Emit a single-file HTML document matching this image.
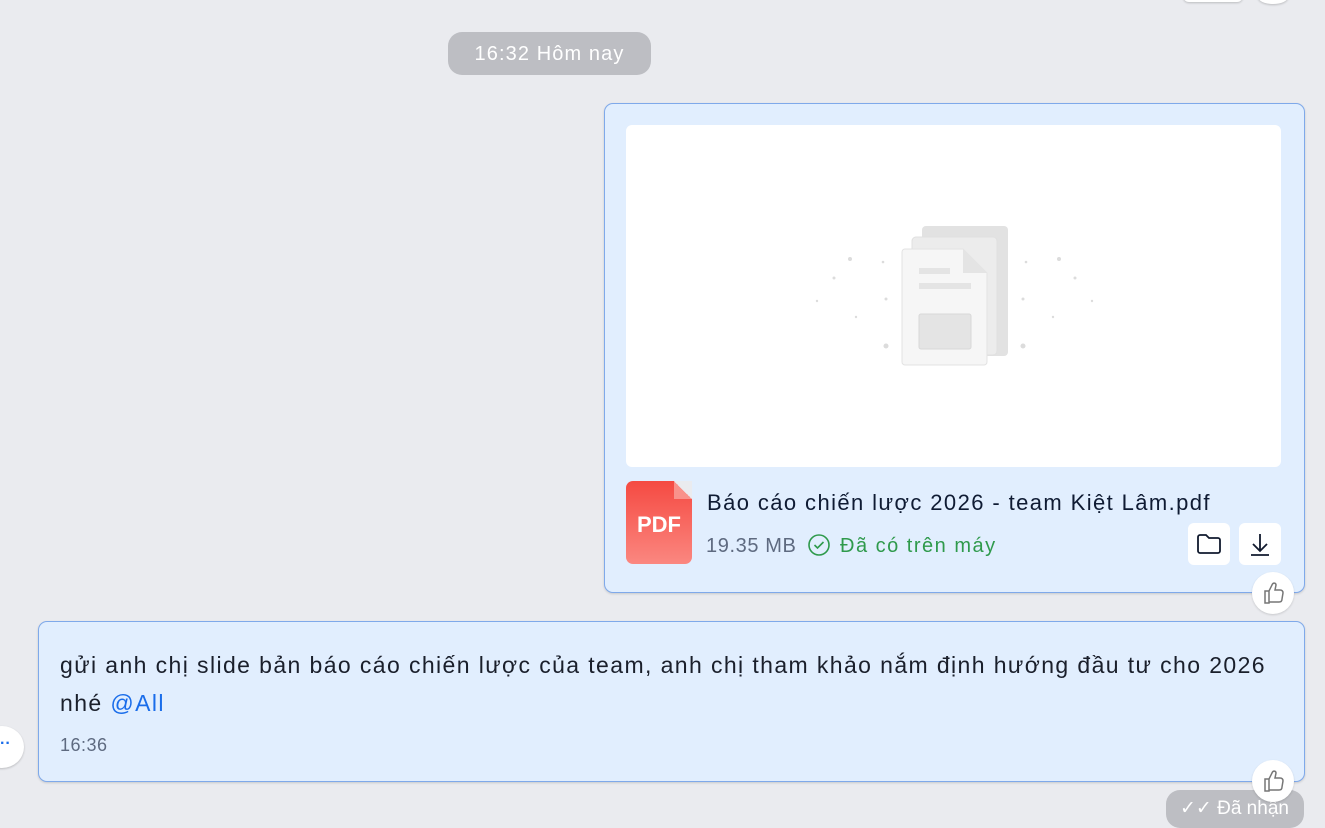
<!DOCTYPE html>
<html><head><meta charset="utf-8"><style>
*{margin:0;padding:0;box-sizing:border-box}
body{width:1325px;height:824px;background:#eaebef;font-family:"Liberation Sans","DejaVu Sans",sans-serif;position:relative;overflow:hidden}
.abs{position:absolute;white-space:nowrap}
.date{left:448px;top:32px;width:203px;height:43px;border-radius:14px;background:#bdbec3;color:#fff;font-size:20px;line-height:45px;text-align:center;letter-spacing:1.1px}
.b1{left:604px;top:103px;width:701px;height:490px;background:#e1eefe;border:1px solid #7fa9ea;border-radius:9px;box-shadow:0 1px 2px rgba(0,0,0,.15)}
.prev{left:626px;top:125px;width:655px;height:342px;background:#fff;border-radius:6px}
.pdf{left:626px;top:481px;width:66px;height:83px;border-radius:7px;background:linear-gradient(#f54a42,#fb8780);color:#fff;font-weight:bold;font-size:22px;text-align:center;line-height:88px}
.fold{left:674px;top:481px;width:18px;height:18px;background:linear-gradient(225deg,#eaebef 50%,#f9928b 50%)}
.btn{width:42px;height:42px;background:#fff;border-radius:6px}
.like{width:42px;height:42px;border-radius:50%;background:#fff;box-shadow:0 1px 2px rgba(0,0,0,.15)}
.b2{left:38px;top:621px;width:1267px;height:161px;background:#e1eefe;border:1px solid #7fa9ea;border-radius:9px;box-shadow:0 1px 2px rgba(0,0,0,.15)}
</style></head><body>
<div class="abs" style="left:1183px;top:-10px;width:60px;height:12px;background:#fff;border-radius:8px;box-shadow:0 1px 2px rgba(0,0,0,.2)"></div>
<div class="abs" style="left:1258px;top:-10px;width:30px;height:14px;background:#fff;border-radius:50%;box-shadow:0 1px 2px rgba(0,0,0,.2)"></div>
<div class="abs date">16:32 Hôm nay</div>
<div class="abs b1"></div>
<div class="abs prev"></div>
<svg class="abs" style="left:800px;top:210px" width="310" height="170" viewBox="0 0 310 170">
<rect x="122" y="16" width="86" height="130" rx="4" fill="#e2e2e2"/>
<rect x="112" y="27" width="85" height="118" rx="4" fill="#ececec" stroke="#e0e0e0"/>
<path d="M105 39h58l24 24v89a3 3 0 0 1-3 3h-79a3 3 0 0 1-3-3v-110a3 3 0 0 1 3-3z" fill="#f6f6f6" stroke="#e3e3e3"/>
<path d="M163 39v24h24z" fill="#e4e4e4"/>
<rect x="119" y="58" width="31" height="6" fill="#e4e4e4"/><rect x="119" y="73" width="52" height="6" fill="#e4e4e4"/>
<rect x="119" y="104" width="52" height="35" rx="2" fill="#e4e4e4" stroke="#d8d8d8"/>
<g fill="#dcdcdc"><circle cx="50" cy="49" r="2"/><circle cx="83" cy="52" r="1.3"/><circle cx="34" cy="68" r="1.5"/><circle cx="17" cy="91" r="1.2"/><circle cx="86" cy="89" r="1.5"/><circle cx="56" cy="107" r="1.2"/><circle cx="86" cy="136" r="2.5"/><circle cx="259" cy="49" r="2"/><circle cx="226" cy="52" r="1.3"/><circle cx="275" cy="68" r="1.5"/><circle cx="292" cy="91" r="1.2"/><circle cx="223" cy="89" r="1.5"/><circle cx="253" cy="107" r="1.2"/><circle cx="223" cy="136" r="2.5"/></g>
</svg>
<div class="abs pdf">PDF</div><div class="abs fold"></div>
<div class="abs" style="left:707px;top:490px;font-size:22px;color:#0f1b33;letter-spacing:1.4px">Báo cáo chiến lược 2026 - team Kiệt Lâm.pdf</div>
<div class="abs" style="left:706px;top:535px;font-size:20px;color:#5e6a80;letter-spacing:0.6px">19.35 MB</div>
<svg class="abs" style="left:807px;top:533px" width="24" height="24"><circle cx="12" cy="12" r="10" fill="none" stroke="#2f9a4c" stroke-width="1.6"/><path d="M7.5 12l3 3 6-6" fill="none" stroke="#2f9a4c" stroke-width="1.6"/></svg>
<div class="abs" style="left:840px;top:535px;font-size:20px;color:#2f9a4c;letter-spacing:1.5px">Đã có trên máy</div>
<div class="abs btn" style="left:1188px;top:523px"><svg width="42" height="42"><path d="M10 14a2 2 0 0 1 2-2h6l3 3h9a2 2 0 0 1 2 2v11a2 2 0 0 1-2 2h-18a2 2 0 0 1-2-2z" fill="none" stroke="#111a2e" stroke-width="1.8"/></svg></div>
<div class="abs btn" style="left:1239px;top:523px"><svg width="42" height="42"><path d="M21 11v17M14 21l7 7 7-7M12 32h18" fill="none" stroke="#111a2e" stroke-width="1.8"/></svg></div>
<div class="abs like" style="left:1252px;top:572px"><svg width="42" height="42"><path d="M13 19h4v12h-4zM17 30h10c2 0 3-1 3-3l1-6c0-2-1-3-3-3h-5l1-5c0-2-3-3-4 0l-3 6" fill="none" stroke="#777" stroke-width="1.5"/></svg></div>
<div class="abs b2"></div>
<div class="abs" style="left:60px;top:646px;font-size:23px;color:#1a1f2b;line-height:38px;letter-spacing:1.4px">gửi anh chị slide bản báo cáo chiến lược của team, anh chị tham khảo nắm định hướng đầu tư cho 2026<br>nhé <span style="color:#1a6dea">@All</span></div>
<div class="abs" style="left:60px;top:735px;font-size:18px;color:#5e6a80;letter-spacing:0.5px">16:36</div>
<div class="abs" style="left:-20px;top:726px;width:44px;height:42px;border-radius:50%;background:#fff;box-shadow:0 1px 2px rgba(0,0,0,.2);color:#1a6dea;font-size:16px;line-height:36px;padding-left:20px;font-weight:bold">··</div>
<div class="abs" style="left:1166px;top:790px;width:138px;height:38px;border-radius:14px;background:#bdbec3;color:#fff;font-size:19px;line-height:38px;padding-left:14px">✓✓ Đã nhận</div>
<div class="abs like" style="left:1252px;top:760px"><svg width="42" height="42"><path d="M13 19h4v12h-4zM17 30h10c2 0 3-1 3-3l1-6c0-2-1-3-3-3h-5l1-5c0-2-3-3-4 0l-3 6" fill="none" stroke="#777" stroke-width="1.5"/></svg></div>
</body></html>
